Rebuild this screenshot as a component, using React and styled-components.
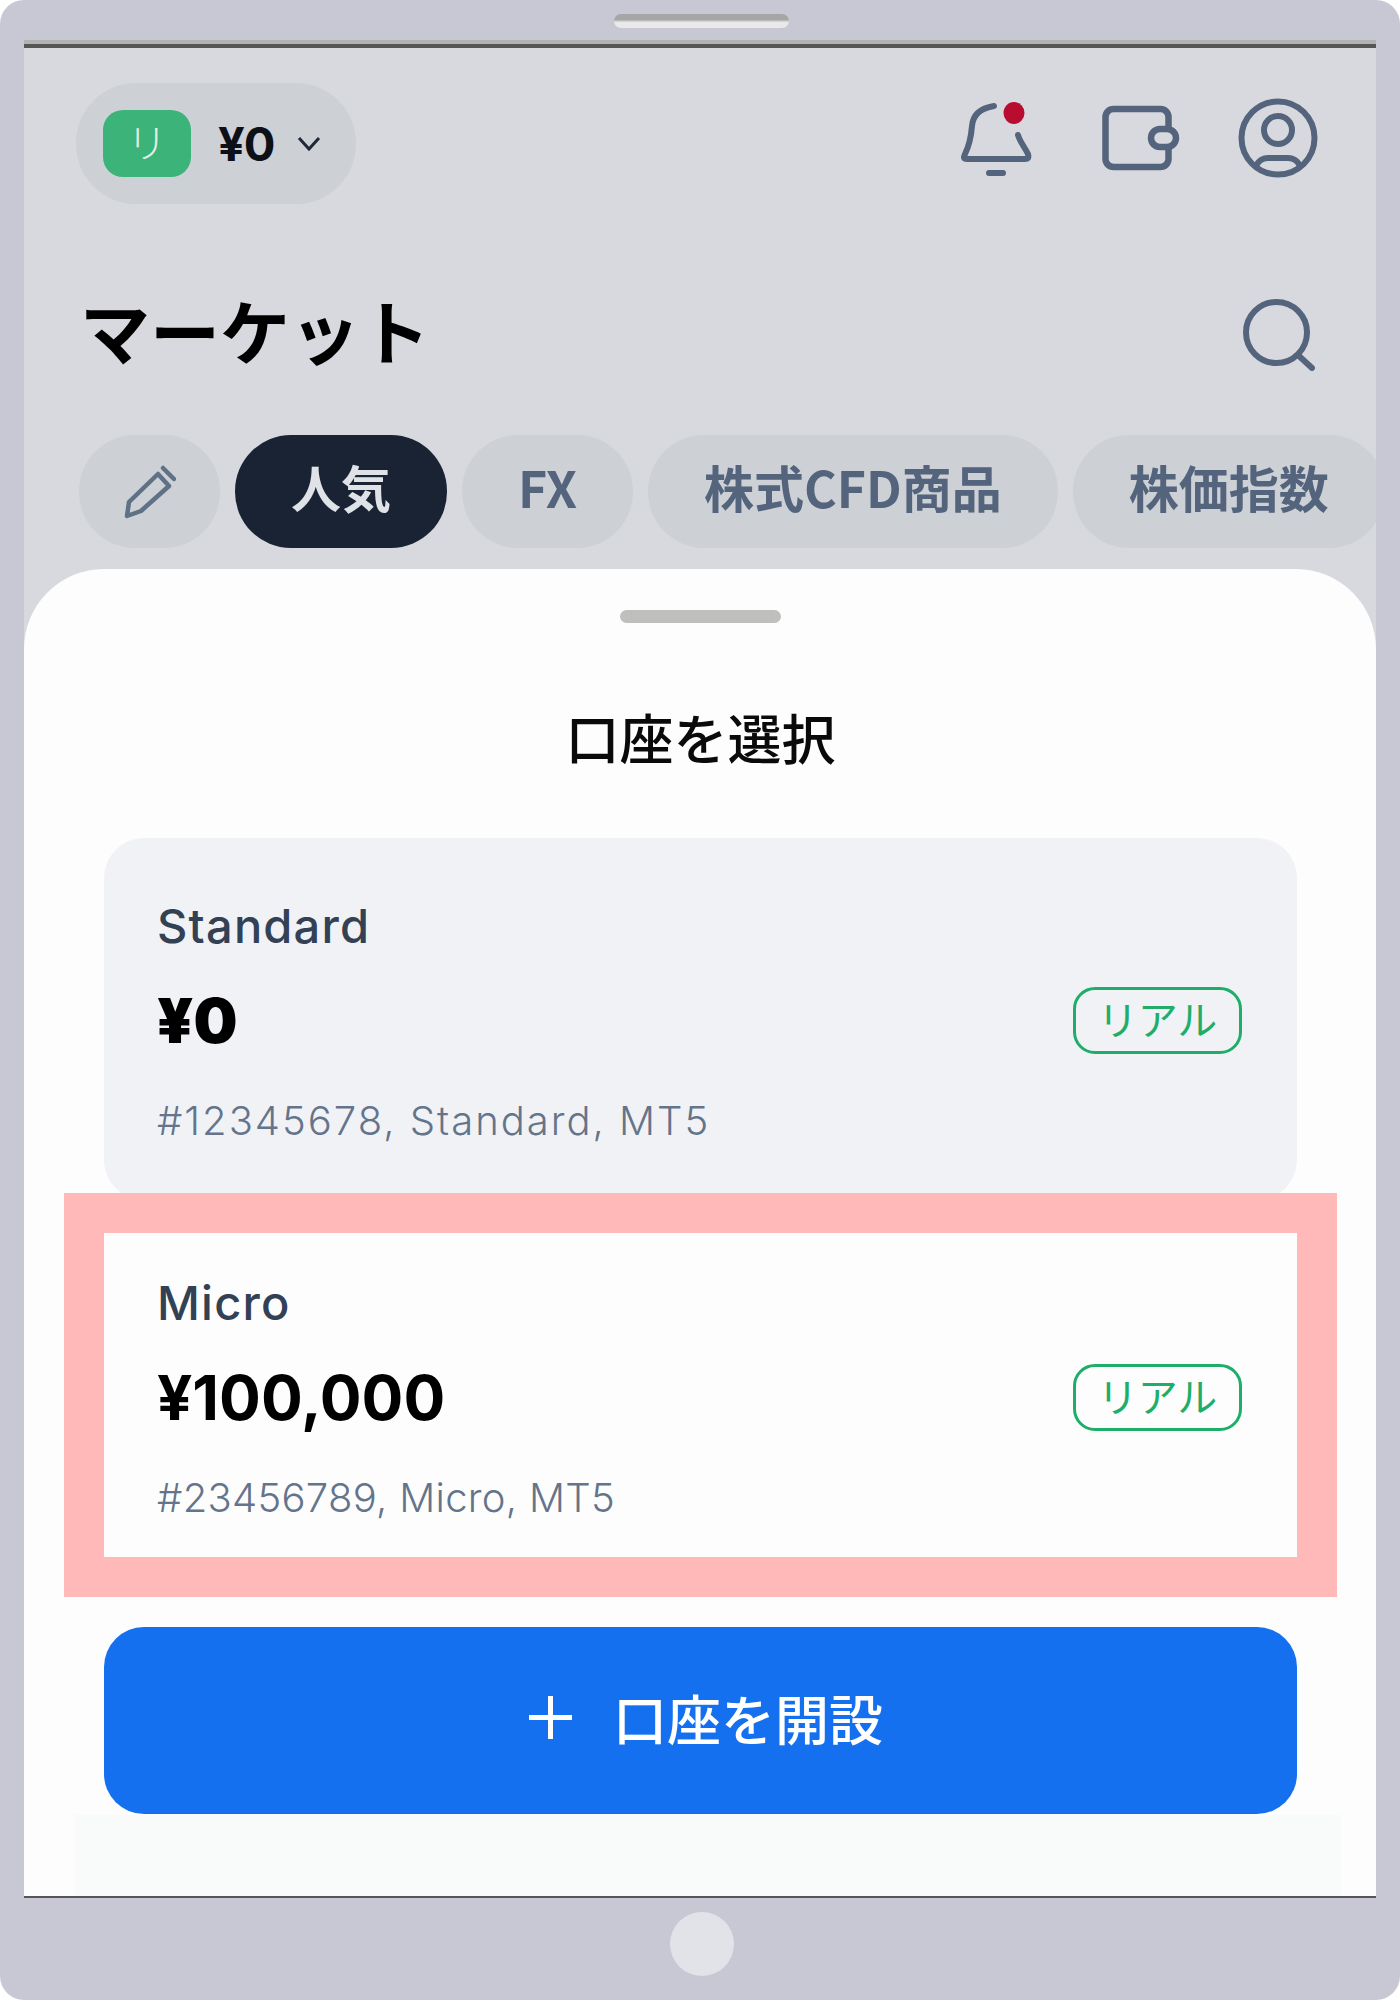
import React from 'react'
import styled, { createGlobalStyle } from 'styled-components'

const GlobalStyle = createGlobalStyle`
    html, body {
        margin: 0;
        padding: 0;
        background: #ffffff;
    }
    * {
        box-sizing: border-box;
    }
`

const JP = `"Noto Sans CJK JP", "Noto Sans", sans-serif`
const LATIN = `Inter, "Noto Sans CJK JP", sans-serif`

const Device = styled.div`
    width: 1400px;
    height: 2000px;
    display: flex;
    flex-direction: column;
    background-color: #c8c8d4;
    border-radius: 24px;
    overflow: hidden;
`
const TopBezel = styled.div`
    height: 40px;
    flex-shrink: 0;
    display: flex;
    justify-content: center;
    padding: 14px 0 0 3px;
`
const Speaker = styled.div`
    width: 175px;
    height: 14px;
    border-radius: 7px;
    background: linear-gradient(#a6a6a6 0 40%, #e9e9e9 60% 100%);
`
const BottomBezel = styled.div`
    height: 102px;
    flex-shrink: 0;
    display: flex;
    justify-content: center;
    padding: 14px 0 0 4px;
`
const HomeButton = styled.div`
    width: 64px;
    height: 64px;
    border-radius: 50%;
    background-color: #e2e3e9;
`
const Screen = styled.div`
    flex: 1;
    min-height: 0;
    margin: 0 24px;
    display: flex;
    flex-direction: column;
    background-color: #d8d9de;
    border-top: 4px solid #b2b2b2;
    border-bottom: 2px solid #555555;
    box-shadow: inset 0 4px 0 #555555;
    overflow: hidden;
`
const TopBar = styled.div`
    display: flex;
    justify-content: space-between;
    align-items: flex-start;
    padding: 39px 58px 0 52px;
`
const AccountPill = styled.div`
    width: 280px;
    height: 121px;
    display: flex;
    align-items: center;
    padding-left: 27px;
    border-radius: 60px;
    background-color: #cdd0d5;
`
const AccountTile = styled.div`
    width: 88px;
    height: 67px;
    display: flex;
    align-items: center;
    justify-content: center;
    padding-bottom: 6px;
    border-radius: 20px;
    background-color: #3cb378;
    color: #e3efe8;
    font-family: ${JP};
    font-weight: 300;
    font-size: 40px;
`
const AccountBalance = styled.span`
    margin-left: 27px;
    font-family: ${LATIN};
    font-weight: 700;
    font-size: 47px;
    letter-spacing: -1px;
    color: #0d1017;
`
const Chevron = styled.svg`
    width: 24px;
    height: 15px;
    margin-left: 22px;
`
const IconGroup = styled.div`
    display: flex;
    gap: 57px;
    margin-top: 15px;
`
const TitleRow = styled.div`
    display: flex;
    justify-content: space-between;
    align-items: center;
    height: 88px;
    margin-top: 87px;
    padding: 0 61px 0 56px;
`
const PageTitle = styled.h1`
    margin: 0 0 10px;
    font-family: ${JP};
    font-weight: 700;
    font-size: 70px;
    line-height: 88px;
    color: #000000;
`
const Tabs = styled.div`
    display: flex;
    gap: 15px;
    margin-top: 56px;
    padding-left: 55px;
`
const Tab = styled.div`
    flex-shrink: 0;
    height: 113px;
    display: flex;
    align-items: center;
    justify-content: center;
    padding: 0 56px 11px;
    border-radius: 56px;
    font-family: ${JP};
    font-weight: 700;
    font-size: 50px;
    color: ${p => (p.$active ? '#dfe3e8' : '#53647c')};
    background-color: ${p => (p.$active ? '#1a2334' : '#cdd0d5')};
`
const IconTab = styled(Tab)`
    width: 141px;
    padding: 0;
`
const Sheet = styled.div`
    flex: 1;
    min-height: 0;
    margin-top: 21px;
    display: flex;
    flex-direction: column;
    padding: 41px 79px 0 80px;
    border-radius: 80px 80px 0 0;
    background-color: #fdfdfd;
`
const Handle = styled.div`
    align-self: center;
    width: 161px;
    height: 13px;
    border-radius: 7px;
    background-color: #bfbfbd;
`
const SheetTitle = styled.h2`
    margin: 75px 0 0;
    text-align: center;
    font-family: ${JP};
    font-weight: 500;
    font-size: 54px;
    line-height: 78px;
    color: #0a0a0a;
`
const AccountList = styled.div`
    display: flex;
    flex-direction: column;
    gap: 15px;
    margin-top: 62px;
`
const AccountCard = styled.div`
    position: relative;
    height: 362px;
    padding: 62px 55px 0 53px;
    border-radius: 40px;
    background-color: ${p => (p.$selected ? '#f1f2f6' : '#fdfdfe')};
`
const AccountName = styled.div`
    font-family: ${LATIN};
    font-weight: 500;
    font-size: 47px;
    line-height: 52px;
    letter-spacing: 1.2px;
    color: #334155;
`
const AmountRow = styled.div`
    display: flex;
    justify-content: space-between;
    align-items: center;
    margin-top: 35px;
`
const Amount = styled.div`
    font-family: ${LATIN};
    font-weight: ${p => (p.$heavy ? 900 : 700)};
    font-size: 62px;
    line-height: 67px;
    color: #000000;
`
const RealBadge = styled.div`
    width: 169px;
    height: 67px;
    display: flex;
    align-items: center;
    justify-content: center;
    padding-bottom: 5px;
    border: 3px solid #1fae6a;
    border-radius: 22px;
    font-family: ${JP};
    font-size: 40px;
    color: #1fae6a;
`
const AccountMeta = styled.div`
    margin-top: 42px;
    font-family: ${LATIN};
    font-weight: 300;
    font-size: 40px;
    line-height: 50px;
    letter-spacing: ${p => (p.$wide ? '2px' : '0.3px')};
    color: #64748b;
`
const Highlight = styled.div`
    position: absolute;
    inset: -22px -40px -20px;
    border: 40px solid #ffb9b9;
`
const OpenButton = styled.div`
    height: 187px;
    flex-shrink: 0;
    margin-top: 50px;
    display: flex;
    align-items: center;
    justify-content: center;
    gap: 41px;
    padding: 0 0 6px 11px;
    border-radius: 40px;
    background-color: #1570ef;
    font-family: ${JP};
    font-weight: 500;
    font-size: 54px;
    color: #ffffff;
`
const FooterStrip = styled.div`
    flex: 1;
    margin: 1px -44px 0 -30px;
    background-color: #f9fbfa;
`

const ICON = '#53647c'

const BellIcon = () => (
    <svg width="88" height="80" viewBox="0 0 88 80" fill="none" stroke={ICON} strokeWidth="6" strokeLinecap="round" strokeLinejoin="round">
        <path d="M38 8C26 10 17 15 16 28C15 40 13 48 9 56C7 60 8 61 11 61H69C72 61 73 60 72 56C68 48 64 44 62 37" />
        <path d="M33 75H47" />
        <ellipse cx="58" cy="15" rx="10.5" ry="11" fill="#b80c30" stroke="none" />
    </svg>
)

const WalletIcon = () => (
    <svg width="80" height="80" viewBox="0 0 80 80" fill="none" stroke={ICON} strokeWidth="6.5">
        <rect x="4.5" y="11" width="63" height="58" rx="8" />
        <rect x="50" y="31" width="25" height="18" rx="9" fill="#d8d9de" />
    </svg>
)

const UserIcon = () => (
    <svg width="80" height="80" viewBox="0 0 80 80" fill="none" stroke={ICON} strokeWidth="6">
        <circle cx="40" cy="40" r="36.5" />
        <circle cx="40" cy="32" r="14" />
        <path d="M18 69C20 62 26 60 30 60H50C54 60 60 62 62 69" />
    </svg>
)

const SearchIcon = () => (
    <svg width="72" height="72" viewBox="0 0 72 72" fill="none" stroke={ICON} strokeWidth="6" strokeLinecap="round">
        <circle cx="33.5" cy="33.5" r="30.5" />
        <path d="M56 57L69 69" />
    </svg>
)

const PencilIcon = () => (
    <svg width="52" height="54" viewBox="0 0 52 54" fill="none" stroke="#5f7186" strokeWidth="4.5" strokeLinejoin="round" strokeLinecap="round">
        <path d="M3 51L5 37L34 9L45 21L17 46Z" />
        <path d="M39 3L50 14" />
    </svg>
)

const accounts = [
    { name: 'Standard', amount: '¥0', meta: '#12345678, Standard, MT5', selected: true },
    { name: 'Micro', amount: '¥100,000', meta: '#23456789, Micro, MT5' },
]

const App = () => {
    return (
        <Device>
            <GlobalStyle />
            <TopBezel>
                <Speaker />
            </TopBezel>
            <Screen>
                <TopBar>
                    <AccountPill>
                        <AccountTile>リ</AccountTile>
                        <AccountBalance>¥0</AccountBalance>
                        <Chevron viewBox="0 0 24 15" fill="none" stroke="#1f2937" strokeWidth="3">
                            <path d="M2 2L12 13L22 2" />
                        </Chevron>
                    </AccountPill>
                    <IconGroup>
                        <BellIcon />
                        <WalletIcon />
                        <UserIcon />
                    </IconGroup>
                </TopBar>
                <TitleRow>
                    <PageTitle>マーケット</PageTitle>
                    <SearchIcon />
                </TitleRow>
                <Tabs>
                    <IconTab>
                        <PencilIcon />
                    </IconTab>
                    <Tab $active>人気</Tab>
                    <Tab>FX</Tab>
                    <Tab>株式CFD商品</Tab>
                    <Tab>株価指数</Tab>
                </Tabs>
                <Sheet>
                    <Handle />
                    <SheetTitle>口座を選択</SheetTitle>
                    <AccountList>
                        {accounts.map(account => (
                            <AccountCard key={account.name} $selected={account.selected}>
                                <AccountName>{account.name}</AccountName>
                                <AmountRow>
                                    <Amount $heavy={account.selected}>{account.amount}</Amount>
                                    <RealBadge>リアル</RealBadge>
                                </AmountRow>
                                <AccountMeta $wide={account.selected}>{account.meta}</AccountMeta>
                                {!account.selected && <Highlight />}
                            </AccountCard>
                        ))}
                    </AccountList>
                    <OpenButton>
                        <svg width="43" height="43" viewBox="0 0 43 43" stroke="#ffffff" strokeWidth="5">
                            <path d="M21.5 0V43M0 21.5H43" />
                        </svg>
                        口座を開設
                    </OpenButton>
                    <FooterStrip />
                </Sheet>
            </Screen>
            <BottomBezel>
                <HomeButton />
            </BottomBezel>
        </Device>
    )
}

export default App
